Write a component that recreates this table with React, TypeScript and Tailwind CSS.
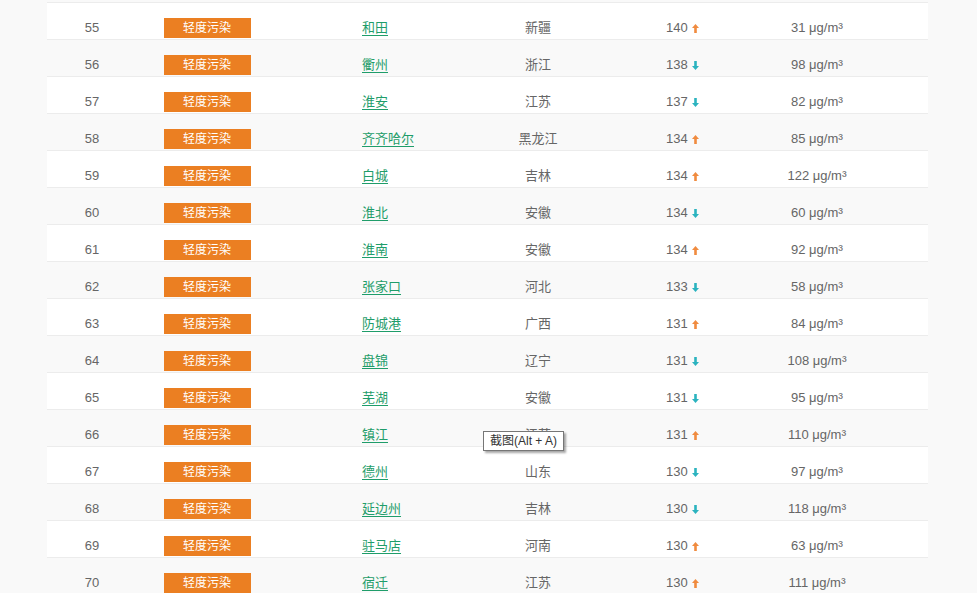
import React from 'react';

type Row = {
  rank: number;
  city: string;
  province: string;
  aqi: number;
  trend: 'up' | 'down';
  pm: number;
};

const rows: Row[] = [
  { rank: 55, city: '和田', province: '新疆', aqi: 140, trend: 'up', pm: 31 },
  { rank: 56, city: '衢州', province: '浙江', aqi: 138, trend: 'down', pm: 98 },
  { rank: 57, city: '淮安', province: '江苏', aqi: 137, trend: 'down', pm: 82 },
  { rank: 58, city: '齐齐哈尔', province: '黑龙江', aqi: 134, trend: 'up', pm: 85 },
  { rank: 59, city: '白城', province: '吉林', aqi: 134, trend: 'up', pm: 122 },
  { rank: 60, city: '淮北', province: '安徽', aqi: 134, trend: 'down', pm: 60 },
  { rank: 61, city: '淮南', province: '安徽', aqi: 134, trend: 'up', pm: 92 },
  { rank: 62, city: '张家口', province: '河北', aqi: 133, trend: 'down', pm: 58 },
  { rank: 63, city: '防城港', province: '广西', aqi: 131, trend: 'up', pm: 84 },
  { rank: 64, city: '盘锦', province: '辽宁', aqi: 131, trend: 'down', pm: 108 },
  { rank: 65, city: '芜湖', province: '安徽', aqi: 131, trend: 'down', pm: 95 },
  { rank: 66, city: '镇江', province: '江苏', aqi: 131, trend: 'up', pm: 110 },
  { rank: 67, city: '德州', province: '山东', aqi: 130, trend: 'down', pm: 97 },
  { rank: 68, city: '延边州', province: '吉林', aqi: 130, trend: 'down', pm: 118 },
  { rank: 69, city: '驻马店', province: '河南', aqi: 130, trend: 'up', pm: 63 },
  { rank: 70, city: '宿迁', province: '江苏', aqi: 130, trend: 'up', pm: 111 },
];

const TrendArrow: React.FC<{ trend: 'up' | 'down' }> = ({ trend }) => (
  <svg width="7" height="9" viewBox="0 0 7 9" className="ml-[4px] inline-block">
    {trend === 'up' ? (
      <path d="M3.5 0 L7 4 L4.8 4 L4.8 9 L2.2 9 L2.2 4 L0 4 Z" fill="#f08b3f" />
    ) : (
      <path d="M3.5 9 L7 5 L4.8 5 L4.8 0 L2.2 0 L2.2 5 L0 5 Z" fill="#2bb3bf" />
    )}
  </svg>
);

const App: React.FC = () => {
  return (
    <div
      className="relative min-h-[593px] w-full overflow-hidden bg-[#f9f9f9] text-[13px] text-[#666]"
      style={{ fontFamily: '"Liberation Sans", "Noto Sans CJK SC", sans-serif' }}
    >
      <div className="ml-[47px] w-[881px]">
        <div className="h-[3px] border-b border-[#ececec] bg-[#f9f9f9]" />
        {rows.map((r, i) => (
          <div
            key={r.rank}
            className={`flex h-[37px] items-end border-b border-[#ececec] pb-[1px] ${
              i % 2 === 0 ? 'bg-white' : 'bg-[#f9f9f9]'
            }`}
          >
            <div className="flex h-[20px] w-[90px] items-center justify-center">{r.rank}</div>
            <div className="flex w-[140px] justify-center">
              <span className="flex h-[20px] w-[87px] items-center justify-center bg-[#eb7f22] text-[12px] text-white">
                轻度污染
              </span>
            </div>
            <div className="flex h-[20px] w-[170px] items-center pl-[85px]">
              <a href="#" className="text-[#1f9d6a] underline underline-offset-[3px]">
                {r.city}
              </a>
            </div>
            <div className="flex h-[20px] w-[182px] items-center justify-center">{r.province}</div>
            <div className="flex h-[20px] w-[112px] items-center pl-[37px]">
              {r.aqi}
              <TrendArrow trend={r.trend} />
            </div>
            <div className="flex h-[20px] w-[152px] items-center justify-center">
              {r.pm} μg/m<span className="text-[14px]">³</span>
            </div>
          </div>
        ))}
      </div>

      <div className="absolute left-[483px] top-[431px] flex h-[20px] items-center border border-[#767676] bg-white px-[6px] text-[12px] text-[#333] shadow-[2px_2px_2px_rgba(0,0,0,0.35)]">
        截图(Alt + A)
      </div>
    </div>
  );
};

export default App;
